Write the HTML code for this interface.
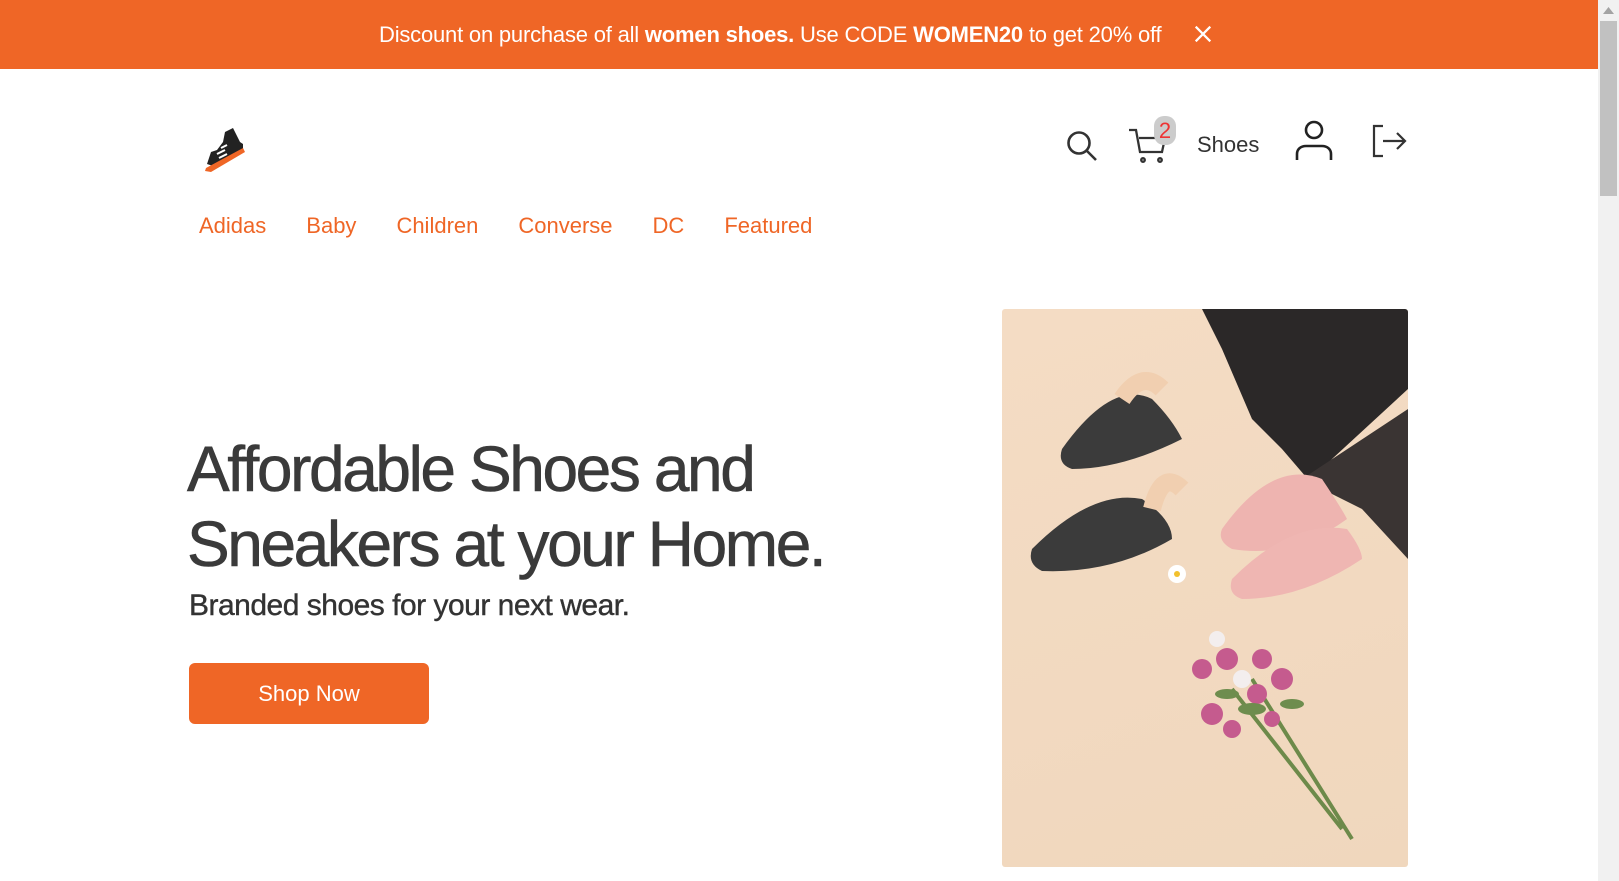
<!DOCTYPE html>
<html><head><meta charset="utf-8"><style>
*{margin:0;padding:0;box-sizing:border-box}
body{width:1619px;height:881px;overflow:hidden;background:#fff;font-family:"Liberation Sans",Roboto,sans-serif;position:relative;color:#333}
.banner{position:absolute;left:0;top:0;width:1598px;height:69px;background:#EF6626;color:#fff;font-size:22px}
.banner .t{position:absolute;left:379px;top:22px;white-space:nowrap;letter-spacing:-0.2px}
.banner .x{position:absolute;left:1193px;top:24px}
.sb{position:absolute;left:1598px;top:0;width:21px;height:881px;background:#f1f1f1}
.thumb{position:absolute;left:2px;top:21px;width:17px;height:175px;background:#c1c1c1}
.nav{position:absolute;top:213px;left:199px;font-size:22px;color:#EF6626}
.nav span{margin-right:40px}
h1{position:absolute;left:187px;top:432px;font-size:64px;font-weight:normal;line-height:75px;color:#3a3a3a;letter-spacing:-2.4px;-webkit-text-stroke:0.6px #3a3a3a}
.sub{position:absolute;left:189px;top:589px;font-size:30px;color:#333;letter-spacing:-0.5px;-webkit-text-stroke:0.4px #333}
.btn{position:absolute;left:189px;top:663px;width:240px;height:61px;background:#EF6626;border-radius:6px;color:#fff;font-size:22px;display:flex;align-items:center;justify-content:center}
.img{position:absolute;left:1002px;top:309px;width:406px;height:558px;background:linear-gradient(160deg,#f4dcc4,#f0d7bd);border-radius:3px;overflow:hidden}
</style></head><body>
<div class="banner"><span class="t">Discount on purchase of all <b>women shoes.</b> Use CODE <b>WOMEN20</b> to get 20% off</span>
<svg class="x" width="20" height="20" viewBox="0 0 22 22"><path d="M3 3L19 19M19 3L3 19" stroke="#fff" stroke-width="2.5"/></svg></div>
<div class="sb"><div class="thumb"></div><svg style="position:absolute;left:5px;top:7px" width="11" height="7"><path d="M0 7L5.5 0L11 7Z" fill="#a3a3a3"/></svg></div>

<svg style="position:absolute;left:203px;top:128px" width="42" height="44" viewBox="0 0 42 44">
<path d="M4 36 L8 24 L14 22 L20 14 L22 4 L30 0 L37 14 L40 16 L40 22 L10 38 Z" fill="#222"/>
<path d="M14 26l8-4M16 30l8-4M18 20l6-3" stroke="#fff" stroke-width="2"/>
<path d="M3 40 L40 20 L42 24 L8 44 L2 43 Z" fill="#EF6626"/>
</svg>

<svg style="position:absolute;left:1066px;top:130px" width="34" height="32" viewBox="0 0 34 32" fill="none" stroke="#333" stroke-width="2.6"><circle cx="13" cy="13" r="10.5"/><path d="M21 21l9 9"/></svg>
<svg style="position:absolute;left:1128px;top:116px" width="50" height="50" viewBox="0 0 50 50" fill="none" stroke="#333" stroke-width="2.3"><path d="M1 14h7l4 22h22l3-14H11"/><circle cx="15" cy="44" r="1.8"/><circle cx="32" cy="44" r="1.8"/>
<rect x="26" y="0" width="22" height="29" rx="10" fill="#ccc" stroke="none"/><text x="37" y="22" text-anchor="middle" font-size="22" fill="#e33" stroke="none" font-family="Liberation Sans">2</text></svg>
<div style="position:absolute;left:1197px;top:132px;font-size:22px;color:#333">Shoes</div>
<svg style="position:absolute;left:1295px;top:120px" width="38" height="42" viewBox="0 0 38 42" fill="none" stroke="#222" stroke-width="2.6"><circle cx="19" cy="10" r="8"/><path d="M2 40v-6c0-5 4-8 9-8h16c5 0 9 3 9 8v6"/></svg>
<svg style="position:absolute;left:1371px;top:124px" width="36" height="34" viewBox="0 0 36 34" fill="none" stroke="#333" stroke-width="2.2"><path d="M12 2H3v30h9M12 17h22M26 9l8 8-8 8"/></svg>

<div class="nav"><span>Adidas</span><span>Baby</span><span>Children</span><span>Converse</span><span>DC</span><span>Featured</span></div>
<h1>Affordable Shoes and<br>Sneakers at your Home.</h1>
<div class="sub">Branded shoes for your next wear.</div>
<div class="btn">Shop Now</div>

<div class="img"><svg width="406" height="558" viewBox="0 0 406 558">
<path d="M200 0 L406 0 L406 80 L330 150 L310 175 L280 140 L250 110 L220 40 Z" fill="#2b2828"/>
<path d="M300 170 L406 100 L406 250 L360 200 Z" fill="#3a3433"/>
<path d="M60 140 Q110 70 150 90 Q170 110 180 130 Q120 160 70 160 Q55 155 60 140Z" fill="#3b3b3b"/>
<path d="M30 240 Q90 180 140 190 Q170 210 170 230 Q110 265 40 262 Q25 255 30 240Z" fill="#3b3b3b"/>
<path d="M220 220 Q270 150 320 170 Q340 200 345 210 Q290 250 230 240 Q215 232 220 220Z" fill="#eeb4b0"/>
<path d="M230 270 Q290 210 345 220 Q360 240 360 250 Q300 290 240 290 Q225 285 230 270Z" fill="#efb6b2"/>
<path d="M120 90 Q140 60 160 80 M150 200 Q160 160 180 180" stroke="#f1cfb0" stroke-width="18" fill="none"/>
<circle cx="175" cy="265" r="9" fill="#fff"/><circle cx="175" cy="265" r="3" fill="#f2c12e"/>
<path d="M230 380 L340 520 M250 370 L350 530" stroke="#6d8a4a" stroke-width="4"/>
<g fill="#c55b8e"><circle cx="200" cy="360" r="10"/><circle cx="225" cy="350" r="11"/><circle cx="260" cy="350" r="10"/><circle cx="280" cy="370" r="11"/><circle cx="255" cy="385" r="10"/><circle cx="210" cy="405" r="11"/><circle cx="230" cy="420" r="9"/><circle cx="270" cy="410" r="8"/></g>
<g fill="#f3eeee"><circle cx="240" cy="370" r="9"/><circle cx="215" cy="330" r="8"/></g>
<g fill="#6e8d4e"><ellipse cx="250" cy="400" rx="14" ry="6"/><ellipse cx="290" cy="395" rx="12" ry="5"/><ellipse cx="225" cy="385" rx="12" ry="5"/></g>
</svg></div>
</body></html>
